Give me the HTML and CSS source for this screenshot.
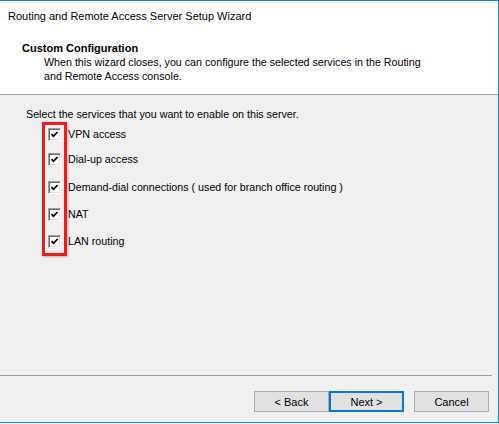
FILE: index.html
```html
<!DOCTYPE html>
<html>
<head>
<meta charset="utf-8">
<link rel="stylesheet" href="styles.css">
</head>
<body>
<div class="window">
  <div class="titlebar">Routing and Remote Access Server Setup Wizard</div>
  <div class="header">
    <div class="h-title">Custom Configuration</div>
    <div class="h-desc">When this wizard closes, you can configure the selected services in the Routing<br>and Remote Access console.</div>
  </div>
  <div class="content">
    <div class="prompt">Select the services that you want to enable on this server.</div>
    <div class="options">
      <div class="row r1"><span class="cb"><svg viewBox="0 0 9 9" width="9" height="9"><path d="M1.5 4.2 L3.5 6.3 L7.6 2" fill="none" stroke="#000" stroke-width="1.8"/></svg></span><span class="lbl">VPN access</span></div>
      <div class="row r2"><span class="cb"><svg viewBox="0 0 9 9" width="9" height="9"><path d="M1.5 4.2 L3.5 6.3 L7.6 2" fill="none" stroke="#000" stroke-width="1.8"/></svg></span><span class="lbl">Dial-up access</span></div>
      <div class="row"><span class="cb"><svg viewBox="0 0 9 9" width="9" height="9"><path d="M1.5 4.2 L3.5 6.3 L7.6 2" fill="none" stroke="#000" stroke-width="1.8"/></svg></span><span class="lbl">Demand-dial connections ( used for branch office routing )</span></div>
      <div class="row"><span class="cb"><svg viewBox="0 0 9 9" width="9" height="9"><path d="M1.5 4.2 L3.5 6.3 L7.6 2" fill="none" stroke="#000" stroke-width="1.8"/></svg></span><span class="lbl">NAT</span></div>
      <div class="row"><span class="cb"><svg viewBox="0 0 9 9" width="9" height="9"><path d="M1.5 4.2 L3.5 6.3 L7.6 2" fill="none" stroke="#000" stroke-width="1.8"/></svg></span><span class="lbl">LAN routing</span></div>
      <div class="highlight"></div>
    </div>
  </div>
  <div class="sep"></div>
  <div class="footer">
    <button class="btn">&lt; Back</button>
    <button class="btn default">Next &gt;</button>
    <button class="btn cancel">Cancel</button>
  </div>
</div>
</body>
</html>
```
FILE: styles.css
```css
html, body {
  margin: 0;
  padding: 0;
  background: #ffffff;
}
body {
  width: 499px;
  height: 424px;
  font-family: "Liberation Sans", Arial, sans-serif;
  font-size: 10.7px;
  color: #000;
}
.window {
  box-sizing: border-box;
  width: 499px;
  height: 423px;
  border-top: 1px solid #1883d7;
  border-right: 1px solid #1883d7;
  border-bottom: 1px solid #1883d7;
  display: flex;
  flex-direction: column;
  background: #f0f0f0;
}
.titlebar {
  height: 31px;
  line-height: 31px;
  padding-left: 8px;
  font-size: 11px;
  background: #fff;
}
.header {
  background: #fff;
  height: 63px;
  box-sizing: border-box;
  padding-top: 9px;
  border-bottom: 1px solid #a0a0a0;
  line-height: 14px;
}
.h-title {
  font-weight: bold;
  padding-left: 22px;
  font-size: 11px;
}
.h-desc {
  padding-left: 44px;
}
.content {
  flex: 1;
  padding-top: 12px;
  line-height: 14px;
}
.prompt {
  padding-left: 26px;
}
.options {
  position: relative;
  margin-top: 6px;
  padding-left: 48px;
}
.row {
  display: flex;
  align-items: flex-start;
  height: 27px;
}
.row.r1 { height: 25px; }
.row.r2 { height: 28px; }
.cb {
  box-sizing: border-box;
  width: 13px;
  height: 13px;
  margin-top: 1px;
  border: 1px solid;
  border-color: #a0a0a0 #ffffff #ffffff #a0a0a0;
  box-shadow: inset 1px 1px 0 #696969, inset -1px -1px 0 #e3e3e3;
  background: #fff;
  display: flex;
  align-items: center;
  justify-content: center;
}
.cb svg { display: block; }
.lbl {
  margin-left: 7px;
}
.highlight {
  position: absolute;
  left: 42px;
  top: -5px;
  width: 25px;
  height: 134px;
  box-sizing: border-box;
  border: 3px solid #ee1c1c;
  box-shadow: 1px 1px 2px rgba(0,0,0,0.25);
}
.sep {
  height: 1px;
  background: #a0a0a0;
  margin-right: 6px;
}
.footer {
  height: 46px;
  box-sizing: border-box;
  padding-top: 15px;
  padding-left: 254px;
  display: flex;
  align-items: flex-start;
}
.btn {
  box-sizing: border-box;
  width: 75px;
  height: 21px;
  margin: 0;
  padding: 0;
  background: #e1e1e1;
  border: 1px solid #adadad;
  font-family: "Liberation Sans", Arial, sans-serif;
  font-size: 11px;
  color: #000;
}
.btn.default {
  border: 2px solid #0078d7;
}
.btn.cancel {
  margin-left: 10px;
}
```
